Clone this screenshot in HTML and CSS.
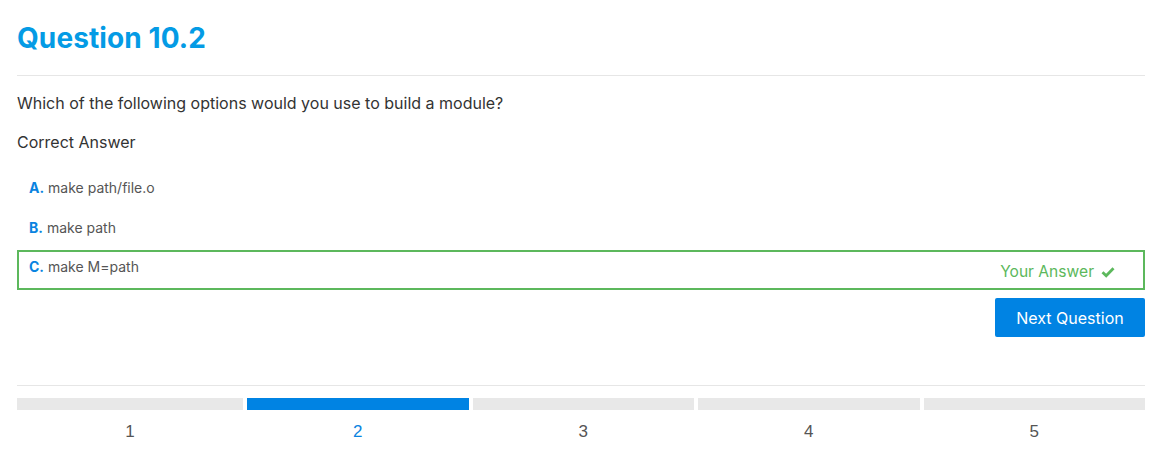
FILE: index.html
```html
<!DOCTYPE html>
<html>
<head>
<meta charset="utf-8">
<link rel="stylesheet" href="styles.css">
</head>
<body>
<div class="page">
  <h1 class="title">Question 10.2</h1>
  <hr class="rule">
  <p class="question">Which of the following options would you use to build a module?</p>
  <p class="label">Correct Answer</p>
  <ul class="options">
    <li class="option"><span class="text"><span class="letter">A.</span> make path/file.o</span></li>
    <li class="option"><span class="text"><span class="letter">B.</span> make path</span></li>
    <li class="option selected"><span class="text"><span class="letter">C.</span> make M=path</span>
      <span class="yours">Your Answer
        <svg class="check" viewBox="0 0 14 12" width="14" height="12"><path d="M1.5 6.2 L5.2 9.8 L12.5 2.2" fill="none" stroke="#5cb85c" stroke-width="2.8"/></svg>
      </span>
    </li>
  </ul>
  <div class="actions"><button class="next">Next Question</button></div>
  <hr class="rule footer-rule">
  <div class="steps">
    <div class="step"><div class="bar"></div><span class="num">1</span></div>
    <div class="step active"><div class="bar"></div><span class="num">2</span></div>
    <div class="step"><div class="bar"></div><span class="num">3</span></div>
    <div class="step"><div class="bar"></div><span class="num">4</span></div>
    <div class="step"><div class="bar"></div><span class="num">5</span></div>
  </div>
</div>
</body>
</html>
```

FILE: styles.css
```css
* { box-sizing: border-box; }
body {
  margin: 0;
  background: #fff;
  font-family: Inter, "Noto Sans", sans-serif;
  color: #333;
}
.page {
  padding: 0 17px;
}
.title {
  margin: 0;
  padding-top: 21px;
  height: 75px;
  font-size: 28px;
  line-height: 34px;
  font-weight: 700;
  color: #049be5;
  letter-spacing: 0.1px;
}
.rule {
  margin: 0;
  border: 0;
  border-top: 1px solid #e6e6e6;
  height: 0;
}
.question {
  margin: 0;
  padding-top: 18px;
  font-size: 16px;
  line-height: 19px;
  color: #333;
}
.label {
  margin: 0;
  padding-top: 20px;
  font-size: 16px;
  line-height: 19px;
  color: #333;
}
.options {
  list-style: none;
  margin: 0;
  padding: 18px 0 0 0;
}
.option {
  height: 40px;
  display: flex;
  align-items: flex-start;
  justify-content: space-between;
  padding: 7px 12px 0 10px;
  font-size: 14px;
  line-height: 17px;
  color: #555;
  border: 2px solid transparent;
}
.letter {
  color: #0983e0;
  font-weight: 700;
}
.option.selected {
  border-color: #5cb85c;
  padding-top: 6px;
}
.yours {
  display: flex;
  align-items: center;
  gap: 7px;
  color: #5cb85c;
  font-size: 15.6px;
  line-height: 18px;
  margin-top: 5px;
  margin-right: 16px;
}
.check { display: block; }
.actions {
  display: flex;
  justify-content: flex-end;
  padding-top: 8px;
}
.next {
  width: 150px;
  height: 39px;
  border: 0;
  border-radius: 2px;
  background: #0083e3;
  color: #fff;
  font-family: Inter, "Noto Sans", sans-serif;
  font-size: 16px;
}
.footer-rule {
  margin-top: 48px;
}
.steps {
  display: grid;
  grid-template-columns: 226px repeat(4, 1fr);
  gap: 4px;
  padding-top: 12px;
}
.step {
  display: flex;
  flex-direction: column;
  align-items: center;
}
.bar {
  width: 100%;
  height: 12px;
  background: #e8e8e8;
}
.num {
  margin-top: 12px;
  font-family: "Liberation Sans", Arial, sans-serif;
  font-size: 17px;
  line-height: 20px;
  color: #555;
}
.step.active .bar { background: #0083e3; }
.step.active .num { color: #0983e0; }
```
